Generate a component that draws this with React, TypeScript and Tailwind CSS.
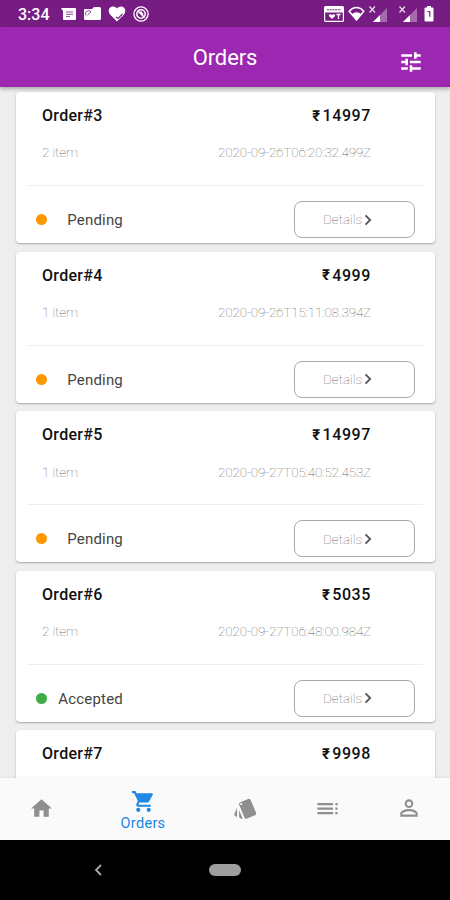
import clsx from "clsx";
import {
    MdHome,
    MdPersonOutline,
    MdShoppingCart,
    MdStyle,
    MdToc,
} from "react-icons/md";

interface Order {
    id: number;
    price: string;
    items: number;
    date: string;
    status: "Pending" | "Accepted";
}

const orders: Order[] = [
    { id: 3, price: "14997", items: 2, date: "2020-09-26T06:20:32.499Z", status: "Pending" },
    { id: 4, price: "4999", items: 1, date: "2020-09-26T15:11:08.394Z", status: "Pending" },
    { id: 5, price: "14997", items: 1, date: "2020-09-27T05:40:52.453Z", status: "Pending" },
    { id: 6, price: "5035", items: 2, date: "2020-09-27T06:48:00.984Z", status: "Accepted" },
];

function SignalIcon() {
    return (
        <svg width="20" height="18" viewBox="0 0 20 18">
            <path d="M19 3v14H5z" fill="#fff" opacity="0.35" />
            <path d="M12 10V17H5z" fill="#fff" />
            <path d="M1.500 1.500l5.500 6M7 1.500l-5.500 6" stroke="#fff" strokeWidth="1.2" opacity="0.85" />
        </svg>
    );
}

function StatusBar() {
    return (
        <div className="flex h-[27px] shrink-0 items-center bg-[#771c82] pt-[1px] pr-[16px] pl-[18px] text-white">
            <span className="w-[43px] pt-[1px] text-[16px] leading-none font-medium">3:34</span>
            <svg width="15" height="14" viewBox="0 0 15 14">
                <path d="M0 1h14a1 1 0 0 1 1 1v10a1 1 0 0 1-1 1H3a1 1 0 0 1-1-1V4z" fill="#fff" />
                <path d="M5 5h7M5 7.300h7M5 9.600h4" stroke="#771c82" strokeWidth=".8" />
            </svg>
            <svg className="ml-[8px]" width="17" height="14" viewBox="0 0 17 14">
                <path d="M1 2h7l2-2h5.500a1.500 1.500 0 0 1 1.500 1.500v10a1.500 1.500 0 0 1-1.500 1.500H1.500A1.500 1.500 0 0 1 0 11.500V3a1 1 0 0 1 1-1z" fill="#fff" />
                <path d="M2 8.500a3 3 0 0 1 5-3.500M3.500 8l3.500-3" fill="none" stroke="#771c82" strokeWidth=".8" />
            </svg>
            <svg className="ml-[7px]" width="18" height="16" viewBox="0 0 18 16">
                <path d="M9 15.500L2 8.500C-.5 5.500.8 1 4.500.6 6.500.4 8 1.300 9 2.600 10 1.300 11.500.4 13.500.6 17.200 1 18.500 5.500 16 8.500z" fill="#fff" />
                <path d="M8 11l2 1.500 4.500-4.500" fill="none" stroke="#771c82" strokeWidth="1.100" />
            </svg>
            <svg className="ml-[7px]" width="16" height="16" viewBox="0 0 16 16" fill="none" stroke="#fff">
                <circle cx="8" cy="8" r="7.100" strokeWidth="1.300" />
                <circle cx="8" cy="8" r="4.200" strokeWidth="1.500" />
                <path d="M4.500 4.500l7 7M7.500 5.500l2.500 3" strokeWidth="1.600" />
            </svg>

            <svg className="ml-auto" width="20" height="16" viewBox="0 0 20 16">
                <rect x=".6" y=".6" width="18.800" height="14.800" rx="1" fill="none" stroke="#fff" strokeWidth="1.200" />
                <path d="M1 1h18v5.500H1z" fill="#fff" />
                <path d="M3 3.800h14" stroke="#771c82" strokeWidth="1" strokeDasharray="2 .7" />
                <path d="M8 13L5 10.200C4 8.500 6.500 7.500 8 9c1.500-1.500 4-.5 3 1.200z" fill="#fff" />
                <path d="M12.500 8.500h4M14.500 8.500V13" stroke="#fff" strokeWidth="1.300" />
            </svg>
            <svg className="ml-[4px]" width="17" height="16" viewBox="0 0 17 16">
                <path d="M1.200 5.200C5.500.4 11.500.4 15.800 5.200L8.500 14z" fill="none" stroke="#fff" strokeWidth="1.500" strokeLinejoin="round" />
                <path d="M3.800 8.200c2.700-2.700 6.700-2.700 9.400 0L8.500 14z" fill="#fff" />
            </svg>
            <div className="ml-[3px] flex gap-[10px]">
                <SignalIcon />
                <SignalIcon />
            </div>
            <svg className="ml-[6px]" width="10" height="16" viewBox="0 0 10 16">
                <path d="M3 0h4v1.500h1.500A1 1 0 0 1 9.500 2.500v12a1 1 0 0 1-1 1h-7a1 1 0 0 1-1-1v-12a1 1 0 0 1 1-1H3z" fill="#fff" />
                <path d="M3.500 5.500l2.300.3v5" fill="none" stroke="#771c82" strokeWidth="1.200" />
            </svg>
        </div>
    );
}

function FilterIcon() {
    return (
        <svg
            className="mt-[9px] mr-[26px] justify-self-end"
            width="26"
            height="26"
            viewBox="0 0 24 24"
            stroke="#fff"
            strokeWidth="2.400"
        >
            <path d="M3 6h10M17 6h4M16 3v6M3 12h4M11 12h10M8 9v6M3 18h6M13 18h8M12 15v6" />
        </svg>
    );
}

function OrderTitle({ id, price }: { id: number; price: string }) {
    return (
        <div className="mt-[14px] flex h-5 shrink-0 items-center justify-between text-[16px] font-medium tracking-[0.3px] text-[#111]">
            <span>Order#{id}</span>
            <span className="flex items-center gap-[2px]">
                <span className="text-[15px] font-bold">₹</span>
                <span className="tracking-[0.6px]">{price}</span>
            </span>
        </div>
    );
}

function OrderCard({ order }: { order: Order }) {
    return (
        <div className="h-[151px] shrink-0 rounded-[4px] bg-white px-3 shadow-[0_1px_2px_rgba(0,0,0,0.3)]">
            <div className="flex h-[94px] flex-col border-b border-[#eeeeee] pr-[52px] pl-[14px]">
                <OrderTitle id={order.id} price={order.price} />
                <div className="mt-[16.500px] flex h-5 items-center justify-between text-[13.500px] font-thin text-[#666]">
                    <span className="tracking-[-0.1px]">{order.items} item</span>
                    <span className="tracking-[-0.190px]">{order.date}</span>
                </div>
            </div>
            <div className="mt-[15px] flex h-[37px] items-center justify-between pr-2 pl-2">
                <div className="flex w-[87px] items-center justify-between">
                    <span
                        className={clsx(
                            "size-[11px] rounded-full",
                            order.status === "Pending" ? "bg-[#ff9800]" : "bg-[#3eab47]"
                        )}
                    />
                    <span className="pt-[2px] text-[15px] tracking-[0.2px] text-[#444]">{order.status}</span>
                </div>
                <button className="flex h-[37px] w-[121px] items-center rounded-[8px] border border-[#aaaaaa] pl-[28px] text-[13.500px] font-thin text-[#666]">
                    <span className="w-[41px] text-left">Details</span>
                    <svg width="8" height="12" viewBox="0 0 8 12" fill="none" stroke="#555" strokeWidth="1.800">
                        <path d="M1.500 1.300L6.200 6l-4.700 4.700" />
                    </svg>
                </button>
            </div>
        </div>
    );
}

function BottomNav() {
    return (
        <nav className="z-10 flex h-[62px] shrink-0 items-center bg-[#fafafa] text-[#8f8f8f] shadow-[0_-1px_2px_rgba(0,0,0,0.06)]">
            <div className="flex w-[82px] justify-center pb-[2px]">
                <MdHome size={25} />
            </div>
            <div className="flex w-[122px] flex-col items-center pt-[5px] text-[#2088e5]">
                <MdShoppingCart size={25} />
                <span className="text-[14.500px] leading-[20px] tracking-[0.3px]">Orders</span>
            </div>
            <div className="flex w-[82px] justify-center pb-[2px]">
                <MdStyle size={25} />
            </div>
            <div className="flex w-[82px] justify-center pb-[2px]">
                <MdToc size={27} />
            </div>
            <div className="flex w-[82px] justify-center pb-[2px]">
                <MdPersonOutline size={26} />
            </div>
        </nav>
    );
}

export default function App() {
    return (
        <div className="flex h-[900px] w-[450px] flex-col overflow-hidden bg-[#eeeeee] font-['Roboto',sans-serif]">
            <StatusBar />
            <header className="z-10 grid h-[60px] shrink-0 grid-cols-[1fr_auto_1fr] items-center bg-[#9c27b0] text-white shadow-[0_2px_4px_rgba(0,0,0,0.3)]">
                <h1 className="col-start-2 pt-[2px] text-[22px] leading-none tracking-[-0.1px]">Orders</h1>
                <FilterIcon />
            </header>

            <main className="flex min-h-0 flex-1 flex-col gap-[8.600px] pt-[5px] pr-[15px] pl-[16px]">
                {orders.map(order => (
                    <OrderCard key={order.id} order={order} />
                ))}
                {/* Next card peeks out above the bottom bar */}
                <div className="min-h-0 flex-1 rounded-t-[4px] bg-white pr-[64px] pl-[26px] shadow-[0_1px_2px_rgba(0,0,0,0.3)]">
                    <OrderTitle id={7} price="9998" />
                </div>
            </main>

            <BottomNav />

            {/* Android navigation buttons */}
            <div className="grid h-[60px] shrink-0 grid-cols-[1fr_auto_1fr] items-center bg-black">
                <svg className="ml-[94px]" width="9" height="12" viewBox="0 0 9 12" fill="none" stroke="#aaa" strokeWidth="1.800">
                    <path d="M7 1L2 6l5 5" />
                </svg>
                <div className="h-[12px] w-[32px] rounded-full bg-[#9e9e9e]" />
            </div>
        </div>
    );
}
